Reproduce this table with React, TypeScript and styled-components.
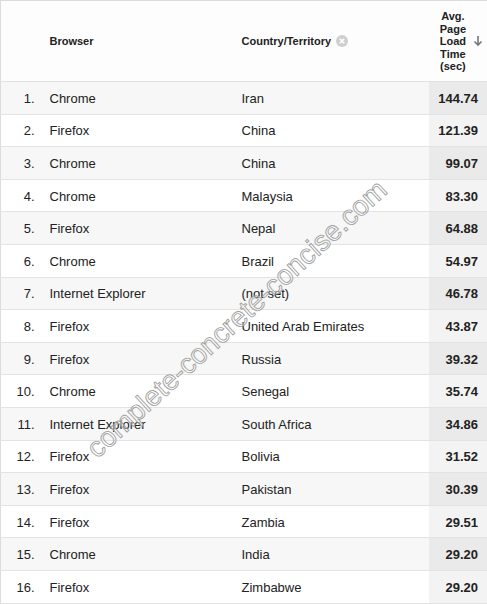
import React from "react";
import styled, { createGlobalStyle } from "styled-components";

const GlobalStyle = createGlobalStyle`
  html, body {
    margin: 0;
    padding: 0;
    background: #fff;
  }
  body {
    font-family: "Liberation Sans", Arial, sans-serif;
  }
`;

type Row = {
  browser: string;
  country: string;
  time: string;
};

const rows: Row[] = [
  { browser: "Chrome", country: "Iran", time: "144.74" },
  { browser: "Firefox", country: "China", time: "121.39" },
  { browser: "Chrome", country: "China", time: "99.07" },
  { browser: "Chrome", country: "Malaysia", time: "83.30" },
  { browser: "Firefox", country: "Nepal", time: "64.88" },
  { browser: "Chrome", country: "Brazil", time: "54.97" },
  { browser: "Internet Explorer", country: "(not set)", time: "46.78" },
  { browser: "Firefox", country: "United Arab Emirates", time: "43.87" },
  { browser: "Firefox", country: "Russia", time: "39.32" },
  { browser: "Chrome", country: "Senegal", time: "35.74" },
  { browser: "Internet Explorer", country: "South Africa", time: "34.86" },
  { browser: "Firefox", country: "Bolivia", time: "31.52" },
  { browser: "Firefox", country: "Pakistan", time: "30.39" },
  { browser: "Firefox", country: "Zambia", time: "29.51" },
  { browser: "Chrome", country: "India", time: "29.20" },
  { browser: "Firefox", country: "Zimbabwe", time: "29.20" },
];

const Wrap = styled.div`
  position: relative;
  width: 487px;
  height: 604px;
  overflow: hidden;
`;

const Table = styled.table`
  width: 487px;
  border-collapse: collapse;
  table-layout: fixed;
  border: 1px solid #dcdcdc;
  color: #222;
`;

const HeadRow = styled.tr`
  height: 81px;
  background: #fdfdfd;
  border-bottom: 1px solid #e2e2e2;
`;

const Th = styled.th`
  font-size: 11px;
  font-weight: bold;
  color: #222;
  text-align: left;
  vertical-align: middle;
  padding: 0 0 0 7px;
  line-height: 12.5px;
`;

const MetricTh = styled(Th)`
  padding: 0;
`;

const HeadInner = styled.div`
  display: flex;
  align-items: center;
  gap: 5px;
`;

const MetricHead = styled.div`
  display: flex;
  align-items: center;
  justify-content: flex-end;
  padding-right: 4px;
  gap: 7px;
`;

const MetricLabel = styled.div`
  text-align: center;
  line-height: 12.5px;
  padding-top: 1px;
`;

const BodyRow = styled.tr<{ $odd: boolean }>`
  height: 32.6px;
  background: ${(p) => (p.$odd ? "#f6f7f6" : "#fff")};
  border-bottom: 1px solid #e3e3e3;
`;

const Td = styled.td`
  font-size: 13px;
  color: #222;
  padding: 1px 0 0 7px;
  white-space: nowrap;
  overflow: hidden;
`;

const NumTd = styled(Td)`
  text-align: right;
  padding: 1px 8px 0 0;
`;

const MetricTd = styled(Td)<{ $odd: boolean }>`
  text-align: right;
  font-weight: bold;
  padding: 1px 9px 0 0;
  background: ${(p) => (p.$odd ? "#e9eae9" : "#f3f3f3")};
`;

const Watermark = styled.div`
  position: absolute;
  left: 237px;
  top: 319px;
  transform: translate(-50%, -50%) rotate(-42.5deg);
  font-family: "Liberation Sans", Arial, sans-serif;
  font-size: 28px;
  white-space: nowrap;
  color: rgba(255, 255, 255, 0.35);
  -webkit-text-stroke: 0.9px #a0a0a0;
  pointer-events: none;
`;

const ClearIcon = () => (
  <svg width="12" height="12" viewBox="0 0 12 12">
    <circle cx="6" cy="6" r="6" fill="#cfcfcf" />
    <path d="M3.8 3.8 L8.2 8.2 M8.2 3.8 L3.8 8.2" stroke="#fff" strokeWidth="1.6" />
  </svg>
);

const SortArrow = () => (
  <svg width="10" height="12" viewBox="0 0 10 12">
    <path d="M5 1 V10 M1.5 6.5 L5 10 L8.5 6.5" stroke="#777" strokeWidth="1.6" fill="none" />
  </svg>
);

const App: React.FC = () => {
  return (
    <Wrap>
      <GlobalStyle />
      <Table>
        <colgroup>
          <col style={{ width: 42 }} />
          <col style={{ width: 192 }} />
          <col style={{ width: 194 }} />
          <col style={{ width: 59 }} />
        </colgroup>
        <thead>
          <HeadRow>
            <Th />
            <Th>Browser</Th>
            <Th>
              <HeadInner>
                Country/Territory
                <ClearIcon />
              </HeadInner>
            </Th>
            <MetricTh>
              <MetricHead>
                <MetricLabel>
                  Avg.
                  <br />
                  Page
                  <br />
                  Load
                  <br />
                  Time
                  <br />
                  (sec)
                </MetricLabel>
                <SortArrow />
              </MetricHead>
            </MetricTh>
          </HeadRow>
        </thead>
        <tbody>
          {rows.map((r, i) => {
            const odd = i % 2 === 0;
            return (
              <BodyRow key={i} $odd={odd}>
                <NumTd>{i + 1}.</NumTd>
                <Td>{r.browser}</Td>
                <Td>{r.country}</Td>
                <MetricTd $odd={odd}>{r.time}</MetricTd>
              </BodyRow>
            );
          })}
        </tbody>
      </Table>
      <Watermark>complete-concrete-concise.com</Watermark>
    </Wrap>
  );
};

export default App;
